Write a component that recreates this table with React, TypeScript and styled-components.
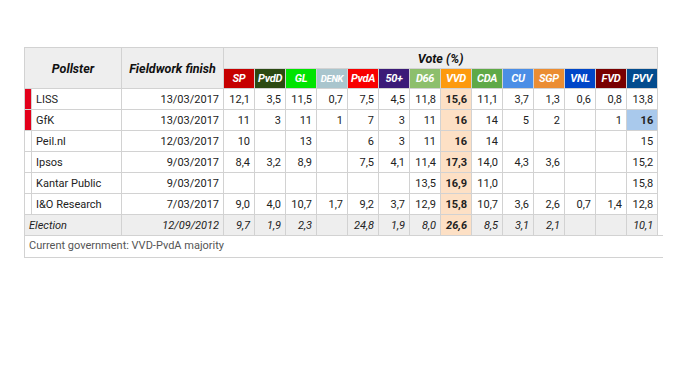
import React from 'react';
import styled, {createGlobalStyle} from 'styled-components';

const Global = createGlobalStyle`
body{
margin:0;
background:#fff;
font-family: Roboto, "Liberation Sans", Arial, sans-serif;
color:#222;
}
`;

const Page = styled.div`
padding: 47px 0 0 24px;
`;

const Table = styled.table`
border-collapse: collapse;
table-layout: fixed;
width: 634px;
font-size: 11px;
line-height: 13px;
`;

const Col = styled.col<{$w: number}>`
width: ${p => p.$w}px;
`;

const HeadRow = styled.tr<{$h: number}>`
height: ${p => p.$h}px;
`;

const HeadCell = styled.th`
background: #eeeeee;
border: 1px solid #d2d2d2;
font-weight: bold;
font-style: italic;
font-size: 12.5px;
color: #111;
padding: 0 4px;
`;

const PartyCell = styled.th<{$bg: string}>`
background: ${p => p.$bg};
color: #fff;
font-size: 11px;
font-weight: bold;
font-style: italic;
padding: 0;
border: 1px solid #d2d2d2;
border-top: none;
letter-spacing: -0.3px;
overflow: hidden;
white-space: nowrap;
`;

const SmallParty = styled.span`
font-size: 9.5px;
`;

const Row = styled.tr<{$election?: boolean}>`
height: 21px;
background: ${p => p.$election ? '#eeeeee' : '#fff'};
font-style: ${p => p.$election ? 'italic' : 'normal'};
`;

const Mark = styled.td<{$bg?: string}>`
padding: 0;
background: ${p => p.$bg || '#fff'};
border: 1px solid #d2d2d2;
`;

const NameCell = styled.td`
border: 1px solid #d2d2d2;
padding: 0 4px;
text-align: left;
white-space: nowrap;
`;

const DateCell = styled.td`
border: 1px solid #d2d2d2;
padding: 0 4px;
text-align: right;
`;

const Num = styled.td<{$lead?: boolean; $bg?: string}>`
border: 1px solid #d2d2d2;
padding: 0 4px 0 0;
text-align: right;
font-weight: ${p => p.$lead ? 'bold' : 'normal'};
${p => p.$bg ? `background:${p.$bg};` : ''}
`;

const Footer = styled.div`
width: 639px;
box-sizing: border-box;
border-left: 1px solid #d2d2d2;
border-bottom: 1px solid #d2d2d2;
margin-top: -1px;
border-top: 1px solid #d2d2d2;
padding: 3px 4px 5px;
font-size: 11px;
line-height: 13px;
color: #555;
`;

const parties: [string, string][] = [
    ['SP', '#c60000'],
    ['PvdD', '#2b4a12'],
    ['GL', '#00e400'],
    ['DENK', '#a9c5cd'],
    ['PvdA', '#f80000'],
    ['50+', '#3b1a78'],
    ['D66', '#8dbf6c'],
    ['VVD', '#fd9a0e'],
    ['CDA', '#5fa947'],
    ['CU', '#4b8ee6'],
    ['SGP', '#eb8d33'],
    ['VNL', '#0046c8'],
    ['FVD', '#790000'],
    ['PVV', '#034c8e'],
];

type Poll = {
    name: string;
    date: string;
    mark?: string;
    values: string[];
    pvvHl?: boolean;
}

const polls: Poll[] = [
    {name: 'LISS', date: '13/03/2017', mark: '#e3001b',
        values: ['12,1', '3,5', '11,5', '0,7', '7,5', '4,5', '11,8', '15,6', '11,1', '3,7', '1,3', '0,6', '0,8', '13,8']},
    {name: 'GfK', date: '13/03/2017', mark: '#e3001b', pvvHl: true,
        values: ['11', '3', '11', '1', '7', '3', '11', '16', '14', '5', '2', '', '1', '16']},
    {name: 'Peil.nl', date: '12/03/2017',
        values: ['10', '', '13', '', '6', '3', '11', '16', '14', '', '', '', '', '15']},
    {name: 'Ipsos', date: '9/03/2017',
        values: ['8,4', '3,2', '8,9', '', '7,5', '4,1', '11,4', '17,3', '14,0', '4,3', '3,6', '', '', '15,2']},
    {name: 'Kantar Public', date: '9/03/2017',
        values: ['', '', '', '', '', '', '13,5', '16,9', '11,0', '', '', '', '', '15,8']},
    {name: 'I&O Research', date: '7/03/2017',
        values: ['9,0', '4,0', '10,7', '1,7', '9,2', '3,7', '12,9', '15,8', '10,7', '3,6', '2,6', '0,7', '1,4', '12,8']},
];

const election = ['9,7', '1,9', '2,3', '', '24,8', '1,9', '8,0', '26,6', '8,5', '3,1', '2,1', '', '', '10,1'];

const VVD = 7;
const PVV = 13;

function cellBg(i: number, hl?: boolean) {
    if (i === VVD) return '#fde0c5';
    if (i === PVV && hl) return '#a9c9ec';
    return undefined;
}

function App() {
    return (
        <Page>
            <Global/>
            <Table>
                <colgroup>
                    <Col $w={7}/>
                    <Col $w={90}/>
                    <Col $w={102}/>
                    {parties.map(([p]) => <Col key={p} $w={31}/>)}
                </colgroup>
                <thead>
                <HeadRow $h={21}>
                    <HeadCell colSpan={2} rowSpan={2}>Pollster</HeadCell>
                    <HeadCell rowSpan={2}>Fieldwork finish</HeadCell>
                    <HeadCell colSpan={14}>Vote (%)</HeadCell>
                </HeadRow>
                <HeadRow $h={20}>
                    {parties.map(([p, c]) => (
                        <PartyCell key={p} $bg={c}>
                            {p === 'DENK' ? <SmallParty>{p}</SmallParty> : p}
                        </PartyCell>
                    ))}
                </HeadRow>
                </thead>
                <tbody>
                {polls.map(poll => (
                    <Row key={poll.name}>
                        <Mark $bg={poll.mark}/>
                        <NameCell>{poll.name}</NameCell>
                        <DateCell>{poll.date}</DateCell>
                        {poll.values.map((v, i) => (
                            <Num key={i}
                                 $lead={i === VVD || (i === PVV && poll.pvvHl)}
                                 $bg={cellBg(i, poll.pvvHl)}>{v}</Num>
                        ))}
                    </Row>
                ))}
                <Row $election>
                    <NameCell colSpan={2}>Election</NameCell>
                    <DateCell>12/09/2012</DateCell>
                    {election.map((v, i) => (
                        <Num key={i} $lead={i === VVD} $bg={cellBg(i)}>{v}</Num>
                    ))}
                </Row>
                </tbody>
            </Table>
            <Footer>Current government: VVD-PvdA majority</Footer>
        </Page>
    )
}

export default App;
